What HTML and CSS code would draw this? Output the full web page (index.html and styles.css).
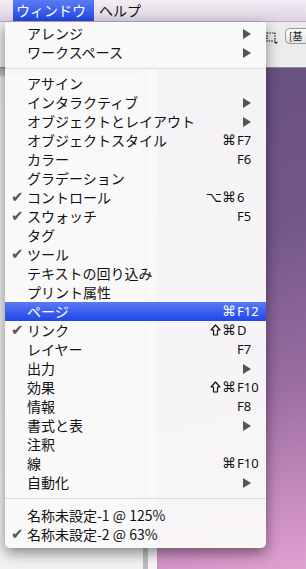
FILE: index.html
```html
<!DOCTYPE html>
<html lang="ja">

<head>
  <meta charset="UTF-8">
  <meta name="viewport" content="width=device-width, initial-scale=1.0">
  <title>ウィンドウ</title>
  <link rel="stylesheet" href="styles.css">
</head>

<body>
  <div class="menubar">
    <div class="menubar-item active">ウィンドウ</div>
    <div class="menubar-item">ヘルプ</div>
  </div>

  <div class="workspace">
    <div class="toolbar">
      <div class="tool-select">
        <svg width="12" height="12" viewBox="0 0 12 12">
          <rect x="1" y="1" width="8" height="8" fill="none" stroke="#111" stroke-width="1.2" stroke-dasharray="1.4 1.2" />
          <path d="M8 10 L12 10 L10 12 Z" fill="#111" />
        </svg>
      </div>
      <div class="tool-button">[基</div>
    </div>
    <div class="doc">
      <div class="doc-page"></div>
      <div class="doc-scroll"></div>
      <div class="doc-gap"></div>
    </div>
    <div class="desktop"></div>

    <div class="menu">
      <div class="item"><span class="check"></span><span class="label">アレンジ</span><span class="mods"></span><span class="key"><span class="arrow"></span></span></div>
      <div class="item"><span class="check"></span><span class="label">ワークスペース</span><span class="mods"></span><span class="key"><span class="arrow"></span></span></div>
      <div class="sep"></div>
      <div class="item"><span class="check"></span><span class="label">アサイン</span><span class="mods"></span><span class="key"></span></div>
      <div class="item"><span class="check"></span><span class="label">インタラクティブ</span><span class="mods"></span><span class="key"><span class="arrow"></span></span></div>
      <div class="item"><span class="check"></span><span class="label">オブジェクトとレイアウト</span><span class="mods"></span><span class="key"><span class="arrow"></span></span></div>
      <div class="item"><span class="check"></span><span class="label">オブジェクトスタイル</span><span class="mods">⌘</span><span class="key">F7</span></div>
      <div class="item"><span class="check"></span><span class="label">カラー</span><span class="mods"></span><span class="key">F6</span></div>
      <div class="item"><span class="check"></span><span class="label">グラデーション</span><span class="mods"></span><span class="key"></span></div>
      <div class="item"><span class="check">✔</span><span class="label">コントロール</span><span class="mods">⌥⌘</span><span class="key">6</span></div>
      <div class="item"><span class="check">✔</span><span class="label">スウォッチ</span><span class="mods"></span><span class="key">F5</span></div>
      <div class="item"><span class="check"></span><span class="label">タグ</span><span class="mods"></span><span class="key"></span></div>
      <div class="item"><span class="check">✔</span><span class="label">ツール</span><span class="mods"></span><span class="key"></span></div>
      <div class="item"><span class="check"></span><span class="label">テキストの回り込み</span><span class="mods"></span><span class="key"></span></div>
      <div class="item"><span class="check"></span><span class="label">プリント属性</span><span class="mods"></span><span class="key"></span></div>
      <div class="item selected"><span class="check"></span><span class="label">ページ</span><span class="mods">⌘</span><span class="key">F12</span></div>
      <div class="item"><span class="check">✔</span><span class="label">リンク</span><span class="mods"><svg class="shift" width="11" height="12" viewBox="0 0 11 12"><path d="M5.5 1 L10 6 L7.5 6 L7.5 11 L3.5 11 L3.5 6 L1 6 Z" fill="none" stroke="currentColor" stroke-width="1.2" stroke-linejoin="round" /></svg>⌘</span><span class="key">D</span></div>
      <div class="item"><span class="check"></span><span class="label">レイヤー</span><span class="mods"></span><span class="key">F7</span></div>
      <div class="item"><span class="check"></span><span class="label">出力</span><span class="mods"></span><span class="key"><span class="arrow"></span></span></div>
      <div class="item"><span class="check"></span><span class="label">効果</span><span class="mods"><svg class="shift" width="11" height="12" viewBox="0 0 11 12"><path d="M5.5 1 L10 6 L7.5 6 L7.5 11 L3.5 11 L3.5 6 L1 6 Z" fill="none" stroke="currentColor" stroke-width="1.2" stroke-linejoin="round" /></svg>⌘</span><span class="key">F10</span></div>
      <div class="item"><span class="check"></span><span class="label">情報</span><span class="mods"></span><span class="key">F8</span></div>
      <div class="item"><span class="check"></span><span class="label">書式と表</span><span class="mods"></span><span class="key"><span class="arrow"></span></span></div>
      <div class="item"><span class="check"></span><span class="label">注釈</span><span class="mods"></span><span class="key"></span></div>
      <div class="item"><span class="check"></span><span class="label">線</span><span class="mods">⌘</span><span class="key">F10</span></div>
      <div class="item"><span class="check"></span><span class="label">自動化</span><span class="mods"></span><span class="key"><span class="arrow"></span></span></div>
      <div class="sep sep-low"></div>
      <div class="item"><span class="check"></span><span class="label">名称未設定-1 @ 125%</span><span class="mods"></span><span class="key"></span></div>
      <div class="item"><span class="check">✔</span><span class="label">名称未設定-2 @ 63%</span><span class="mods"></span><span class="key"></span></div>
    </div>
  </div>
</body>

</html>
```

FILE: styles.css
```css
:root {
  --menuText: #111;
  --menuGrey: #555;
}

body {
  margin: 0;
  width: 306px;
  height: 569px;
  overflow: hidden;
  font-family: "Noto Sans CJK JP", "Noto Sans", sans-serif;
  font-size: 14px;
  color: var(--menuText);
}

.menubar {
  height: 21px;
  display: flex;
  padding-left: 13px;
  background: linear-gradient(to bottom, #f3eef4, #ddd3e3);
  border-bottom: 1px solid #b8acc0;
}

.menubar-item {
  line-height: 21px;
  padding: 0 8px 0 3px;
  margin-right: 2px;
}

.menubar-item.active {
  color: #fff;
  background: linear-gradient(to bottom, #5b7cf4, #1f45e8);
}

.workspace {
  position: relative;
  height: 547px;
  display: grid;
  grid-template-columns: 157px 1fr;
  grid-template-rows: 46px 1fr;
}

.toolbar {
  grid-column: 1 / 3;
  background: #ececec;
  border-bottom: 1px solid #8f8a93;
  display: flex;
  justify-content: flex-end;
  align-items: flex-start;
  gap: 7px;
  padding-top: 6px;
}

.tool-button {
  width: 17px;
  height: 14px;
  border: 1px solid #9a9a9a;
  border-right: none;
  border-radius: 5px 0 0 5px;
  background: linear-gradient(#fdfdfd, #e2e2e2);
  font-size: 10px;
  line-height: 14px;
  padding-left: 3px;
  white-space: nowrap;
}

.doc {
  display: flex;
  background: #e8e8e8;
}

.doc-page {
  flex: 1;
  background: linear-gradient(to bottom, #a9a9a9 0, #c8c8c8 8px, #ececec 9px, #f2f2f2);
}

.doc-scroll {
  width: 5px;
  background: #bdbdbd;
}

.doc-gap {
  width: 9px;
  background: #f6f6f6;
}

.desktop {
  background: linear-gradient(165deg, #67507f 0%, #73578a 35%, #9a6da0 65%, #d294c6 92%, #dea2d0 100%);
}

/* the open menu, dropped over the window */
.menu {
  position: absolute;
  left: 5px;
  top: 0;
  width: 261px;
  padding: 2px 0 4px 0;
  background: rgba(250, 249, 250, 0.97);
  border-radius: 0 0 5px 5px;
  box-shadow: 0 5px 14px rgba(0, 0, 0, 0.45);
}

.item {
  display: grid;
  grid-template-columns: 22px 1fr 40px 25px;
  padding-right: 5px;
  height: 19px;
  line-height: 19px;
  white-space: nowrap;
}

.item.selected {
  color: #fff;
  background: linear-gradient(to bottom, #5a7af3, #2046e9);
}

.check {
  font-family: "DejaVu Sans", sans-serif;
  font-size: 15px;
  color: var(--menuGrey);
  padding-left: 6px;
}

.mods {
  text-align: right;
  font-family: "DejaVu Sans", sans-serif;
  font-size: 14px;
}

.shift {
  vertical-align: -1px;
  margin-right: 1px;
}

.key {
  font-family: "Noto Sans", sans-serif;
  font-size: 13px;
  padding-left: 1px;
}

.arrow {
  display: inline-block;
  margin-left: 6px;
  width: 0;
  height: 0;
  border-top: 5px solid transparent;
  border-bottom: 5px solid transparent;
  border-left: 8px solid var(--menuGrey);
  vertical-align: -1px;
}

.sep {
  height: 12px;
  background: linear-gradient(to bottom, transparent 6px, #dcdcdc 6px, #dcdcdc 7px, transparent 7px);
}

.sep-low {
  height: 14px;
}
```
